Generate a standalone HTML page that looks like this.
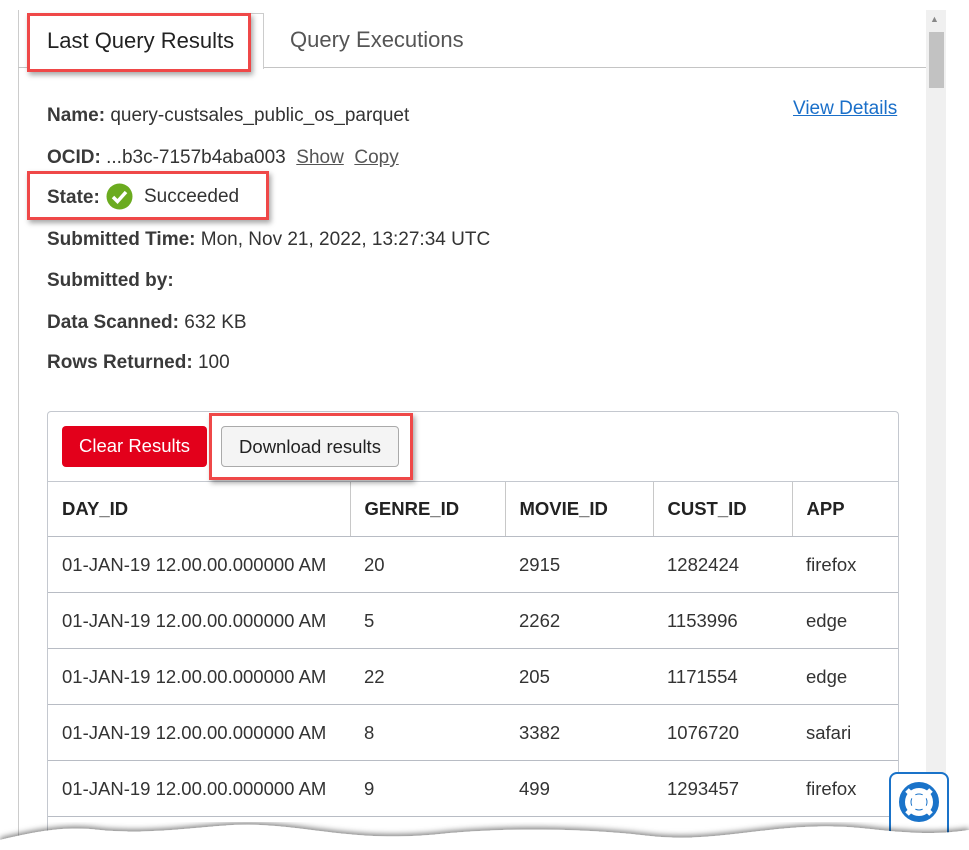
<!DOCTYPE html>
<html style="overflow:hidden;height:850px"><head><style>
body{margin:0;width:969px;height:850px;background:#fff;position:relative;overflow:hidden;font-family:"Liberation Sans",sans-serif;color:#333}
.a{position:absolute}
.lbl{font-weight:bold;color:#3a3a3a}
.f{font-size:19px}
.hl{position:absolute;border:3px solid #ef4848;box-shadow:2px 3px 5px rgba(0,0,0,.35)}
table{border-collapse:collapse;position:absolute;left:48px;top:482px;width:850px;font-size:18.5px;table-layout:fixed}
td,th{text-align:left;padding:0 0 0 14px;height:55px;border-bottom:1.5px solid #b8bcc4;white-space:nowrap;overflow:hidden}
th{font-weight:bold;color:#222;height:54px}
th+th{border-left:1px solid #c8c8c8}
a{color:#555;text-decoration:underline}
</style></head><body>
<div class="a" style="left:18px;top:10px;width:1px;height:840px;background:#ccc"></div>
<div class="a" style="left:18px;top:67px;width:908px;height:1px;background:#c4c4c4"></div>
<div class="a" style="left:28px;top:13px;width:234px;height:55px;background:#fff;border:1px solid #ccc;border-bottom:none"></div>
<div class="a" style="left:47px;top:28px;font-size:22px;color:#222">Last Query Results</div>
<div class="a" style="left:290px;top:27px;font-size:22px;color:#555">Query Executions</div>
<div class="a" style="left:926px;top:10px;width:20px;height:840px;background:#f0f0f0"></div>
<div class="a" style="left:929px;top:32px;width:15px;height:56px;background:#c2c2c2"></div>
<div class="a" style="left:930px;top:14px;font-size:9px;color:#888">▲</div>
<div class="a f" style="left:47px;top:105px"><span class="lbl">Name:</span> query-custsales_public_os_parquet</div>
<div class="a f" style="left:793px;top:98px"><a style="color:#1a6fc9">View Details</a></div>
<div class="a f" style="left:47px;top:147px"><span class="lbl">OCID:</span> ...b3c-7157b4aba003 &nbsp;<a>Show</a> &nbsp;<a>Copy</a></div>
<div class="a f" style="left:47px;top:187px"><span class="lbl">State:</span></div>
<svg class="a" style="left:106px;top:183px" width="27" height="27"><circle cx="13.5" cy="13.5" r="13" fill="#6bab1f"/><path d="M7 14l4.5 4.5L20 9" stroke="#fff" stroke-width="3.5" fill="none"/></svg>
<div class="a f" style="left:144px;top:186px">Succeeded</div>
<div class="a f" style="left:47px;top:229px"><span class="lbl">Submitted Time:</span> Mon, Nov 21, 2022, 13:27:34 UTC</div>
<div class="a f" style="left:47px;top:270px"><span class="lbl">Submitted by:</span></div>
<div class="a f" style="left:47px;top:312px"><span class="lbl">Data Scanned:</span> 632 KB</div>
<div class="a f" style="left:47px;top:352px"><span class="lbl">Rows Returned:</span> 100</div>
<div class="a" style="left:47px;top:411px;width:850px;height:440px;border:1px solid #c4c8cf;border-bottom:none;border-radius:4px 4px 0 0"></div>
<div class="a" style="left:62px;top:426px;width:145px;height:41px;background:#e3001b;border-radius:4px;color:#fff;font-size:18.5px;line-height:40px;text-align:center">Clear Results</div>
<div class="a" style="left:221px;top:426px;width:176px;height:39px;background:#f4f4f4;border:1px solid #aaa;border-radius:4px;color:#222;font-size:18.5px;line-height:39px;text-align:center">Download results</div>
<div class="a" style="left:48px;top:481px;width:850px;height:1px;background:#c4c8cf"></div>
<table>
<colgroup><col style="width:302px"><col style="width:155px"><col style="width:148px"><col style="width:139px"><col></colgroup>
<tr><th>DAY_ID</th><th>GENRE_ID</th><th>MOVIE_ID</th><th>CUST_ID</th><th>APP</th></tr>
<tr><td>01-JAN-19 12.00.00.000000 AM</td><td>20</td><td>2915</td><td>1282424</td><td>firefox</td></tr>
<tr><td>01-JAN-19 12.00.00.000000 AM</td><td>5</td><td>2262</td><td>1153996</td><td>edge</td></tr>
<tr><td>01-JAN-19 12.00.00.000000 AM</td><td>22</td><td>205</td><td>1171554</td><td>edge</td></tr>
<tr><td>01-JAN-19 12.00.00.000000 AM</td><td>8</td><td>3382</td><td>1076720</td><td>safari</td></tr>
<tr><td>01-JAN-19 12.00.00.000000 AM</td><td>9</td><td>499</td><td>1293457</td><td>firefox</td></tr>
</table>
<div class="a" style="left:889px;top:772px;width:56px;height:90px;background:#fff;border:2px solid #1a73c9;border-radius:8px"></div>
<svg class="a" style="left:897px;top:780px" width="44" height="44"><circle cx="22" cy="22" r="17" stroke="#1a73c9" stroke-width="6" fill="none"/><circle cx="22" cy="22" r="8" fill="#fff" stroke="#1a73c9" stroke-width="1"/><g stroke="#fff" stroke-width="5"><path d="M10 10l7 7M34 10l-7 7M10 34l7-7M34 34l-7-7"/></g></svg>
<div class="a" style="left:905px;top:833px;width:30px;height:6px;background:repeating-linear-gradient(90deg,#bbb 0 7px,transparent 7px 11px)"></div>
<svg class="a" style="left:0;top:800px" width="969" height="50"><defs><filter id="s"><feDropShadow dx="0" dy="-2" stdDeviation="3" flood-opacity=".5"/></filter></defs><path filter="url(#s)" d="M0 40 C40 30 70 26 100 30 C160 36 220 22 260 25 C320 28 360 42 440 34 C520 26 600 30 650 36 C720 44 780 20 860 28 C900 32 930 36 969 30 L969 50 L0 50Z" fill="#fff"/></svg>
<div class="hl" style="left:27px;top:13px;width:218px;height:53px"></div>
<div class="hl" style="left:27px;top:171px;width:236px;height:43px"></div>
<div class="hl" style="left:209px;top:413px;width:198px;height:61px"></div>
</body></html>
